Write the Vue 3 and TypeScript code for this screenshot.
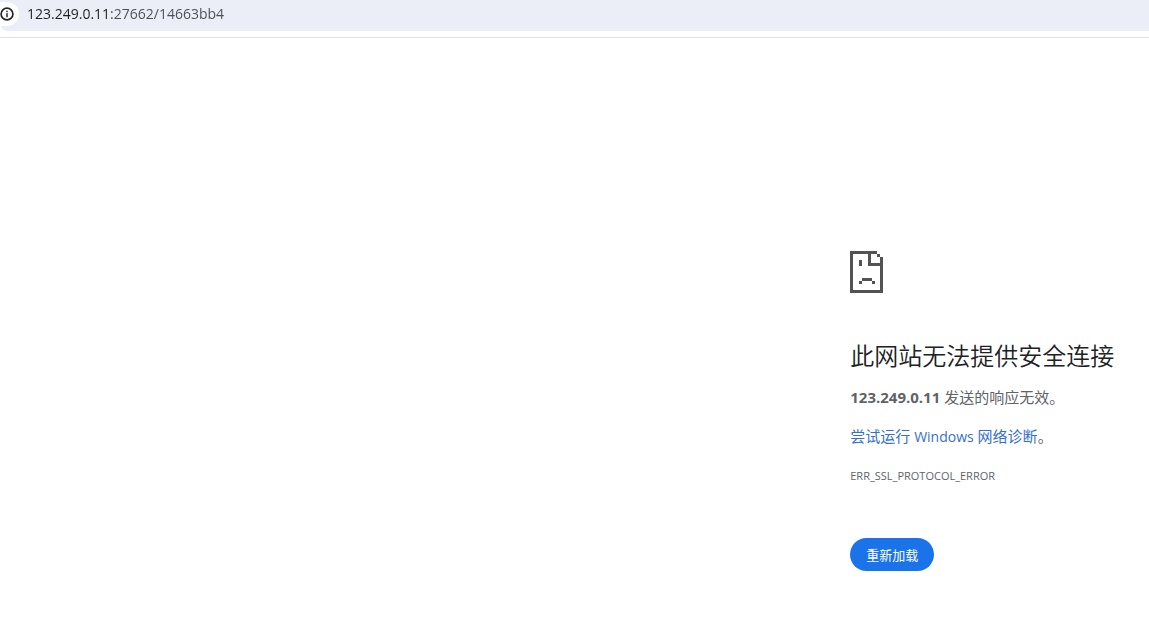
<script setup lang="ts">
import { ref } from 'vue'

const address = ref('123.249.0.11:27662/14663bb4')
const host = '123.249.0.11'
const errorCode = 'ERR_SSL_PROTOCOL_ERROR'

function reload(): void {
  window.location.reload()
}
</script>

<template>
  <div class="browser">
    <header class="toolbar">
      <form class="omnibox" @submit.prevent>
        <button class="site-info" type="button" aria-label="查看网站信息">
          <svg width="14" height="14" viewBox="0 0 14 14" aria-hidden="true">
            <circle cx="7" cy="7" r="5.9" fill="none" stroke="#242528" stroke-width="1.7" />
            <path d="M6.25 6.3h1.5v4h-1.5zM6.25 3.7h1.5v1.5h-1.5z" fill="#242528" />
          </svg>
        </button>
        <input v-model="address" class="address" type="text" aria-label="地址" spellcheck="false" />
      </form>
    </header>

    <main class="error">
      <svg class="sad-page" width="33" height="42" viewBox="0 0 33 42" shape-rendering="crispEdges" aria-hidden="true">
        <path
          fill="#535353"
          fill-rule="evenodd"
          d="M0 0h27v3h3v3h3v36H0zM3 3v36h27V15H18V3zM21 3v9h9V6h-3V3zM9 9h3v6H9zM12 27h10v3H12zM9 30h3v3H9zM22 30h3v3h-3z"
        />
      </svg>
      <h1>此网站无法提供安全连接</h1>
      <p><strong>{{ host }}</strong> 发送的响应无效。</p>
      <p><a href="#diagnose">尝试运行 <span class="latin">Windows</span> 网络诊断</a>。</p>
      <p class="code">{{ errorCode }}</p>
      <button class="reload" type="button" @click="reload">重新加载</button>
    </main>
  </div>
</template>

<style>
body {
  margin: 0;
  background: #fff;
}
</style>

<style scoped>
.browser {
  font-family: "Open Sans", "Noto Sans CJK SC", sans-serif;
  color: #5f6368;
}

.toolbar {
  padding-bottom: 6px;
  border-bottom: 1px solid #dedfe1;
}

.omnibox {
  display: flex;
  align-items: center;
  height: 31px;
  padding-bottom: 3px;
  box-sizing: border-box;
  background: #ebeef7;
  border-bottom-left-radius: 8px;
}

.site-info {
  display: flex;
  align-items: center;
  justify-content: flex-end;
  width: 19px;
  height: 24px;
  padding: 0 5px 0 0;
  border: 0;
  border-radius: 0 12px 12px 0;
  background: #fff;
}

.address {
  flex: 1;
  min-width: 0;
  margin-left: 8px;
  padding: 0;
  border: 0;
  outline: 0;
  font: 14px/20px "Open Sans", sans-serif;
  color: transparent;
  background: linear-gradient(to right, #1f1f1f 84px, #4b4d52 84px);
  background-clip: text;
}

.error {
  margin-left: 74%;
  padding-top: 213px;
  font-size: 15px;
  line-height: 24px;
}

.sad-page {
  display: block;
}

h1 {
  margin: 47px 0 13px;
  font-size: 24px;
  font-weight: 350;
  line-height: 32px;
  color: #202124;
}

p {
  margin: 0 0 15px;
}

a {
  color: #3470cb;
  text-decoration: none;
}

.latin {
  font-size: 14px;
}

.code {
  font-size: 11px;
}

.reload {
  display: block;
  margin-top: 50px;
  padding: 0 16px;
  height: 33px;
  border: 0;
  border-radius: 20px;
  background: #1a73e8;
  color: #fff;
  font: 13px/20px "Noto Sans CJK SC", sans-serif;
}
</style>
